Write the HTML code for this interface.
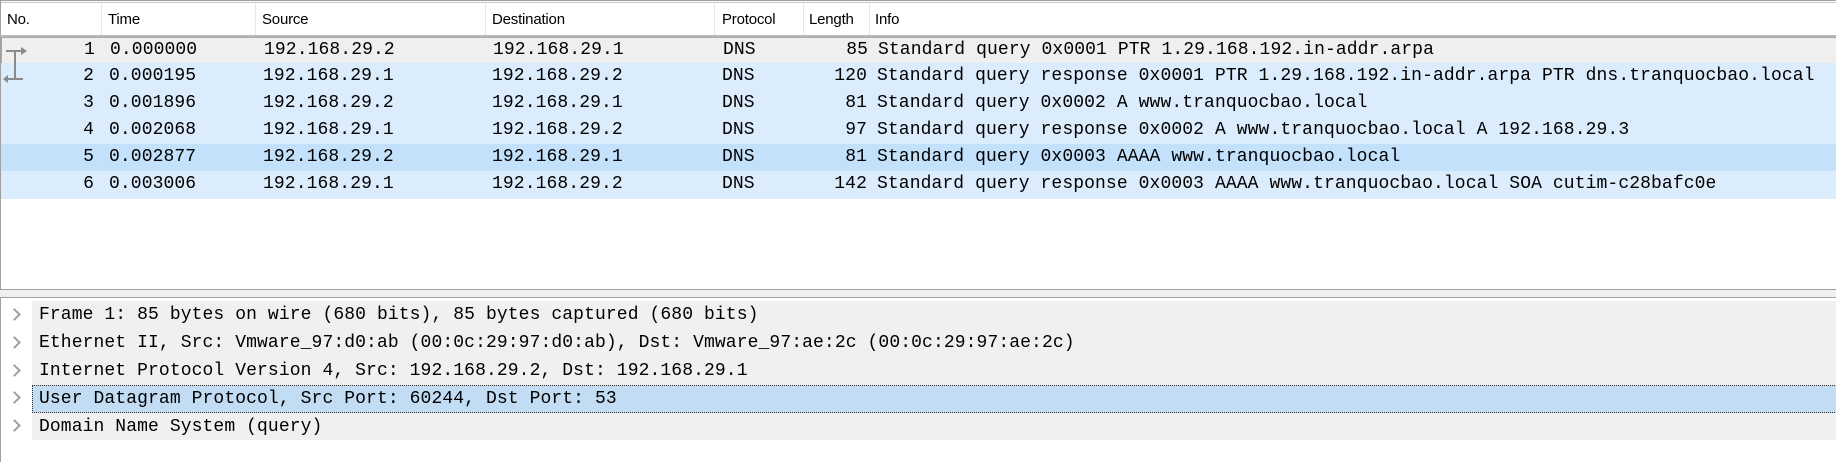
<!DOCTYPE html>
<html><head><meta charset="utf-8"><style>
body{margin:0;width:1836px;height:462px;background:#fff;position:relative;overflow:hidden;font-family:"Liberation Mono",monospace;}
.abs{position:absolute}
.hdr{font-family:"Liberation Sans",sans-serif;font-size:15px;color:#000;top:11px;letter-spacing:-0.2px}
.div{top:4px;width:1px;height:31px;background:#e6e6e6}
.row{position:absolute;left:1px;width:1835px;height:27px;font-size:18px;line-height:27px;color:#000;white-space:pre;letter-spacing:0.1px}
.row span{position:absolute;top:0}
.d{position:absolute;left:32px;width:1804px;height:28px;background:#f0f0f0;font-size:18px;line-height:28px;white-space:pre;letter-spacing:0.1px}
.d span{position:absolute;left:7px}
.ar{position:absolute;left:10px;width:7px;height:7px;border-right:2px solid #a0a0a0;border-top:2px solid #a0a0a0;transform:rotate(45deg)}
</style></head><body>
<div class="abs" style="left:0;top:0;width:1836px;height:3px;border-top:1px solid #a0a0a0;border-bottom:1px solid #c8c8c8;box-sizing:border-box"></div>
<div class="abs" style="left:0;top:0;width:1px;height:290px;background:#a0a0a0"></div>
<div class="hdr abs" style="left:7px">No.</div>
<div class="hdr abs" style="left:108px">Time</div>
<div class="hdr abs" style="left:262px">Source</div>
<div class="hdr abs" style="left:492px">Destination</div>
<div class="hdr abs" style="left:722px">Protocol</div>
<div class="hdr abs" style="left:809px">Length</div>
<div class="hdr abs" style="left:875px">Info</div>
<div class="div abs" style="left:101px"></div><div class="div abs" style="left:255px"></div><div class="div abs" style="left:485px"></div><div class="div abs" style="left:714px"></div><div class="div abs" style="left:803px"></div><div class="div abs" style="left:869px"></div>
<div class="abs" style="left:0;top:35px;width:1836px;height:2px;background:#b8b8b8"></div>

<div class="row" style="top:37px;background:#efefef;border-top:1px solid #a8a8a8;border-bottom:1px solid #a8a8a8;border-left:1px solid #a8a8a8;height:25px;line-height:25px"><span style="left:0;width:93px;text-align:right">1</span><span style="left:108px">0.000000</span><span style="left:262px">192.168.29.2</span><span style="left:491px">192.168.29.1</span><span style="left:721px">DNS</span><span style="left:0;width:866px;text-align:right">85</span><span style="left:876px">Standard query 0x0001 PTR 1.29.168.192.in-addr.arpa</span></div>
<div class="row" style="top:63px;background:#dbecfc"><span style="left:0;width:93px;text-align:right">2</span><span style="left:108px">0.000195</span><span style="left:262px">192.168.29.1</span><span style="left:491px">192.168.29.2</span><span style="left:721px">DNS</span><span style="left:0;width:866px;text-align:right">120</span><span style="left:876px">Standard query response 0x0001 PTR 1.29.168.192.in-addr.arpa PTR dns.tranquocbao.local</span></div>
<div class="row" style="top:90px;background:#dbecfc"><span style="left:0;width:93px;text-align:right">3</span><span style="left:108px">0.001896</span><span style="left:262px">192.168.29.2</span><span style="left:491px">192.168.29.1</span><span style="left:721px">DNS</span><span style="left:0;width:866px;text-align:right">81</span><span style="left:876px">Standard query 0x0002 A www.tranquocbao.local</span></div>
<div class="row" style="top:117px;background:#dbecfc"><span style="left:0;width:93px;text-align:right">4</span><span style="left:108px">0.002068</span><span style="left:262px">192.168.29.1</span><span style="left:491px">192.168.29.2</span><span style="left:721px">DNS</span><span style="left:0;width:866px;text-align:right">97</span><span style="left:876px">Standard query response 0x0002 A www.tranquocbao.local A 192.168.29.3</span></div>
<div class="row" style="top:144px;background:#c3e1fb"><span style="left:0;width:93px;text-align:right">5</span><span style="left:108px">0.002877</span><span style="left:262px">192.168.29.2</span><span style="left:491px">192.168.29.1</span><span style="left:721px">DNS</span><span style="left:0;width:866px;text-align:right">81</span><span style="left:876px">Standard query 0x0003 AAAA www.tranquocbao.local</span></div>
<div class="row" style="top:171px;background:#dbecfc;height:28px"><span style="left:0;width:93px;text-align:right">6</span><span style="left:108px">0.003006</span><span style="left:262px">192.168.29.1</span><span style="left:491px">192.168.29.2</span><span style="left:721px">DNS</span><span style="left:0;width:866px;text-align:right">142</span><span style="left:876px">Standard query response 0x0003 AAAA www.tranquocbao.local SOA cutim-c28bafc0e</span></div>

<svg class="abs" style="left:3px;top:44px" width="26" height="40"><path d="M3 7H20M12 7V35M3 35H20" stroke="#8a8a8a" stroke-width="2" fill="none"/><path d="M18 3L24 7L18 11Z M5 31L0 35L5 39Z" fill="#8a8a8a"/></svg>

<div class="abs" style="left:0;top:289px;width:1836px;height:1px;background:#a0a0a0"></div>
<div class="abs" style="left:0;top:290px;width:1836px;height:7px;background:#f0f0f0"></div>
<div class="abs" style="left:0;top:297px;width:1836px;height:1px;background:#a0a0a0"></div>
<div class="abs" style="left:0;top:297px;width:1px;height:165px;background:#a0a0a0"></div>

<div class="d" style="top:301px"><span>Frame 1: 85 bytes on wire (680 bits), 85 bytes captured (680 bits)</span></div>
<div class="d" style="top:329px"><span>Ethernet II, Src: Vmware_97:d0:ab (00:0c:29:97:d0:ab), Dst: Vmware_97:ae:2c (00:0c:29:97:ae:2c)</span></div>
<div class="d" style="top:357px"><span>Internet Protocol Version 4, Src: 192.168.29.2, Dst: 192.168.29.1</span></div>
<div class="d" style="top:385px;background:#c2dcf3;border-top:1px dotted #333;border-bottom:1px dotted #333;border-left:1px dotted #333;height:26px;line-height:26px"><span style="left:6px">User Datagram Protocol, Src Port: 60244, Dst Port: 53</span></div>
<div class="d" style="top:413px;height:27px"><span>Domain Name System (query)</span></div>
<div class="ar" style="top:310px"></div><div class="ar" style="top:338px"></div><div class="ar" style="top:366px"></div><div class="ar" style="top:393px"></div><div class="ar" style="top:421px"></div>
</body></html>
